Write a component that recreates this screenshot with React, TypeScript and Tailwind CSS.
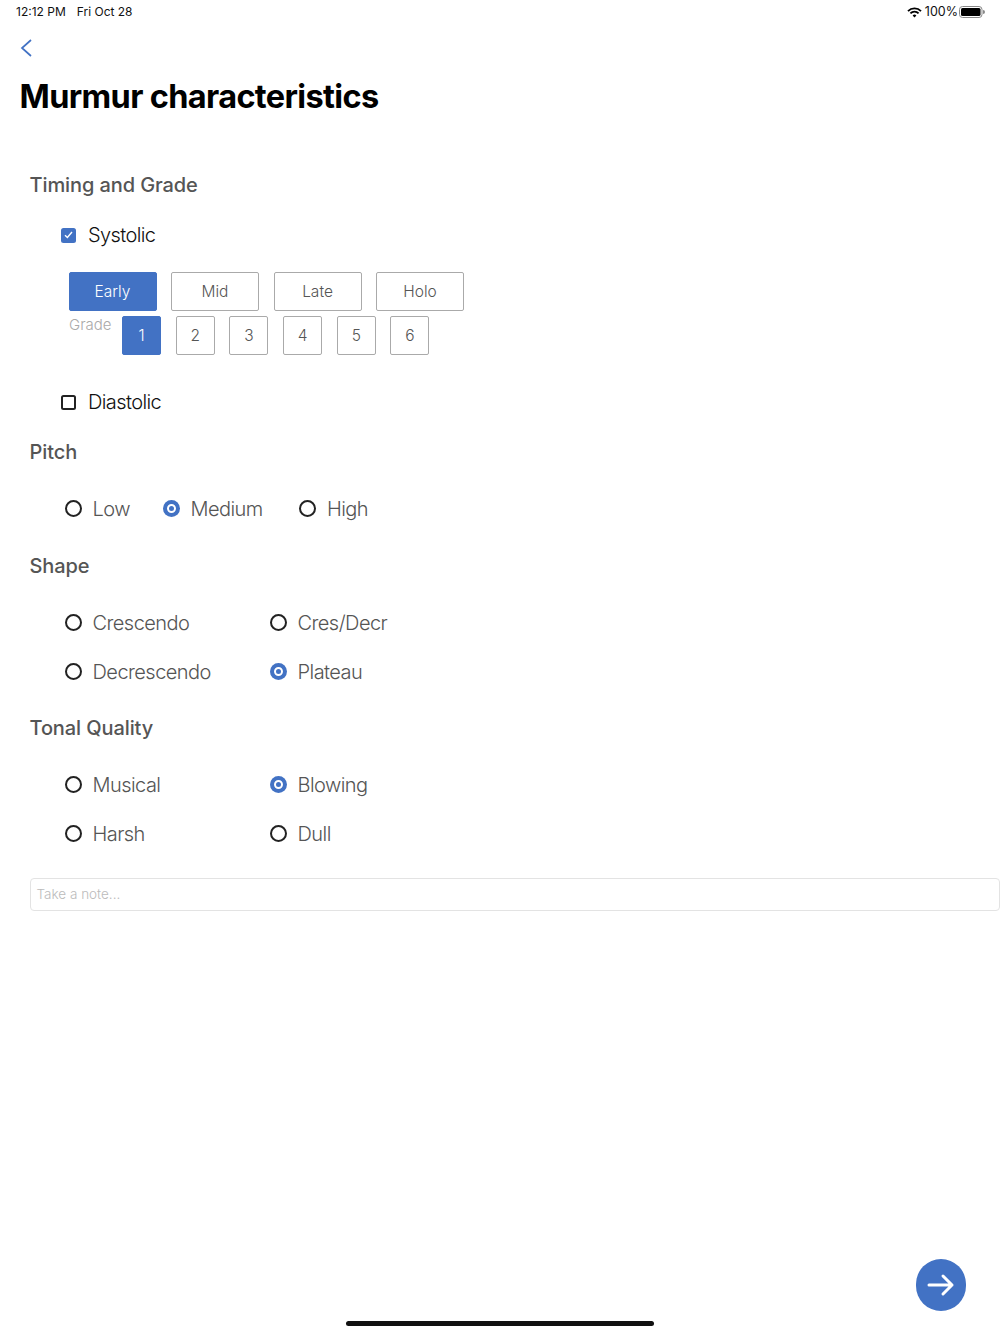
import React from "react";

const Heading = ({ children, className = "" }: { children: React.ReactNode; className?: string }) => (
  <h2 className={`h-[30px] leading-[30px] text-[20px] font-medium text-[#555] tracking-[-0.1px] ${className}`}>{children}</h2>
);

const Radio = ({ label, on = false, className = "" }: { label: string; on?: boolean; className?: string }) => (
  <div className={`flex items-center h-[30px] ${className}`}>
    {on ? (
      <span className="w-[17px] h-[17px] rounded-full bg-[#4272c4] flex items-center justify-center shrink-0 -translate-y-px">
        <span className="w-[9px] h-[9px] rounded-full border-2 border-white" />
      </span>
    ) : (
      <span className="w-[17px] h-[17px] rounded-full border-2 border-[#222] shrink-0 -translate-y-px" />
    )}
    <span className="ml-[11px] text-[20px] font-light text-[#555] tracking-[-0.55px] whitespace-nowrap">{label}</span>
  </div>
);

const Grid = ({ rows }: { rows: [string, boolean, string, boolean][] }) => (
  <div className="flex flex-col gap-[19px] pl-[35px]">
    {rows.map(([a, aOn, b, bOn]) => (
      <div key={a} className="flex">
        <Radio label={a} on={aOn} className="w-[205px]" />
        <Radio label={b} on={bOn} />
      </div>
    ))}
  </div>
);

const Segment = ({ label, on = false, className = "" }: { label: string; on?: boolean; className?: string }) => (
  <div
    className={`flex items-center justify-center h-[39px] rounded-[2px] border text-[15.5px] leading-[20px] font-light ${
      on ? "bg-[#4272c4] border-[#4272c4] text-white" : "bg-white border-[#aaa] text-[#555]"
    } ${className}`}
  >
    <span className="-translate-y-[0.5px]">{label}</span>
  </div>
);

export default function App() {
  return (
    <div className="relative w-[1000px] h-[1334px] bg-white overflow-hidden font-['Inter',sans-serif] text-black">
      <div className="flex justify-between items-center h-[24px] pl-4 pr-[15px] text-[12px] text-[#111]">
        <div className="flex gap-[11px]">
          <span>12:12 PM</span>
          <span>Fri Oct 28</span>
        </div>
        <div className="flex items-center gap-[3px]">
          <svg width="15" height="11" viewBox="0 0 15 11" fill="none" stroke="#000" strokeLinecap="butt">
            <path d="M1 4.2 A9 9 0 0 1 14 4.2" strokeWidth="1.8" />
            <path d="M3.4 6.4 A5.6 5.6 0 0 1 11.6 6.4" strokeWidth="1.8" />
            <path d="M7.5 10.5 L5.6 8.5 A2.8 2.8 0 0 1 9.4 8.5 Z" fill="#000" stroke="none" />
          </svg>
          <span className="text-[12.5px]">100%</span>
          <svg width="26" height="12" viewBox="0 0 26 12" className="-ml-[2px]">
            <rect x="0.5" y="0.5" width="22.5" height="11" rx="3" fill="none" stroke="#888" />
            <rect x="2" y="2" width="19.5" height="8" rx="1.5" fill="#000" />
            <path d="M24 4 a2 2 0 0 1 0 4 Z" fill="#888" />
          </svg>
        </div>
      </div>

      <div className="h-[48px] pl-[20px] pt-[14px]">
        <svg width="13" height="20" viewBox="0 0 13 20" fill="none" stroke="#4272c4" strokeWidth="1.7">
          <path d="M11 2 L2 10 L11 18" />
        </svg>
      </div>

      <h1 className="pl-[19.5px] h-[48px] leading-[50px] text-[32.5px] font-bold tracking-[-0.65px]">Murmur characteristics</h1>

      <div className="pl-[29.5px] pt-[50px] flex flex-col">
        <Heading>Timing and Grade</Heading>

        <div className="flex items-center h-[30px] mt-[20px] pl-[31.5px]">
          <span className="w-[15px] h-[15px] rounded-[2.5px] bg-[#4272c4] flex items-center justify-center">
            <svg width="9" height="8" viewBox="0 0 9 8" fill="none" stroke="#fff" strokeWidth="1.4">
              <path d="M1 4.2 L3.4 6.5 L8 1" />
            </svg>
          </span>
          <span className="ml-[12px] text-[20px] leading-[32px] font-light text-[#111] tracking-[-0.6px]">Systolic</span>
        </div>

        <div className="flex gap-[14.5px] pl-[39px] mt-[22px]">
          <Segment label="Early" on className="w-[88px]" />
          <Segment label="Mid" className="w-[88px]" />
          <Segment label="Late" className="w-[88px]" />
          <Segment label="Holo" className="w-[88px]" />
        </div>

        <div className="flex pl-[39.5px] mt-[5px]">
          <span className="w-[53px] text-[15px] font-light text-[#aaa] leading-[18px]">Grade</span>
          <div className="flex gap-[14.7px]">
            {["1", "2", "3", "4", "5", "6"].map((g) => (
              <Segment key={g} label={g} on={g === "1"} className="w-[39px]" />
            ))}
          </div>
        </div>

        <div className="flex items-center h-[30px] mt-[32px] pl-[31.5px]">
          <span className="w-[15px] h-[15px] rounded-[2.5px] border-2 border-[#222]" />
          <span className="ml-[12px] text-[20px] leading-[32px] font-light text-[#111] tracking-[-0.6px]">Diastolic</span>
        </div>

        <Heading className="mt-[20px]">Pitch</Heading>
        <div className="flex pl-[35px] mt-[27px]">
          <Radio label="Low" className="w-[98px]" />
          <Radio label="Medium" on className="w-[136.5px]" />
          <Radio label="High" />
        </div>

        <Heading className="mt-[27px]">Shape</Heading>
        <div className="mt-[27px]">
          <Grid rows={[["Crescendo", false, "Cres/Decr", false], ["Decrescendo", false, "Plateau", true]]} />
        </div>

        <Heading className="mt-[26px]">Tonal Quality</Heading>
        <div className="mt-[27px]">
          <Grid rows={[["Musical", false, "Blowing", true], ["Harsh", false, "Dull", false]]} />
        </div>

        <div className="mt-[29px] h-[33px] rounded-[4px] border border-[#e3e3e3] flex items-center pl-[6px] text-[13.5px] font-light text-[#bbb]">
          Take a note...
        </div>
      </div>

      <div className="absolute left-[916px] top-[1259px] w-[50px] h-[52px] rounded-full bg-[#4272c4] flex items-center justify-center">
        <svg width="28" height="24" viewBox="0 0 28 24" fill="none" stroke="#fff" strokeWidth="3" strokeLinecap="round" strokeLinejoin="round">
          <path d="M2 12 H25 M16 3 L25 12 L16 21" />
        </svg>
      </div>
      <div className="absolute left-[346px] top-[1321px] w-[308px] h-[5px] rounded-full bg-[#111]" />
    </div>
  );
}
